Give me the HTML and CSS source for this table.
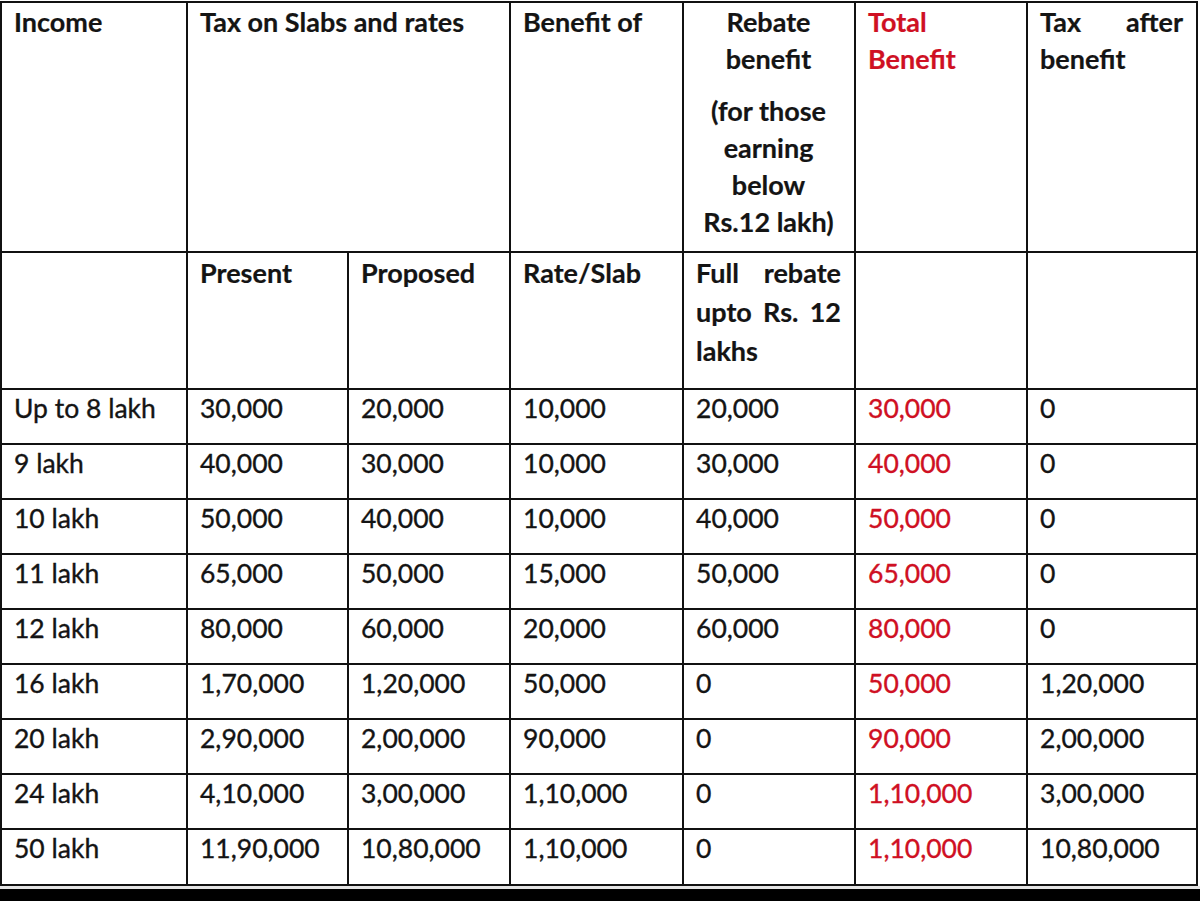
FILE: index.html
```html
<!DOCTYPE html>
<html lang="en">
<head>
<meta charset="utf-8">
<title>Tax benefit table</title>
<link rel="stylesheet" href="styles.css">
</head>
<body>
<table class="tax-table">
  <colgroup>
    <col class="c-income">
    <col class="c-present">
    <col class="c-proposed">
    <col class="c-slab">
    <col class="c-rebate">
    <col class="c-total">
    <col class="c-after">
  </colgroup>
  <thead>
    <tr class="head-1">
      <th>Income</th>
      <th colspan="2">Tax on Slabs and rates</th>
      <th>Benefit of</th>
      <th class="center">
        <div>Rebate<br>benefit</div>
        <div class="note">(for those<br>earning<br>below<br>Rs.12 lakh)</div>
      </th>
      <th class="red">Total Benefit</th>
      <th class="justify">Tax after benefit</th>
    </tr>
    <tr class="head-2">
      <th></th>
      <th>Present</th>
      <th>Proposed</th>
      <th>Rate/Slab</th>
      <th class="justify">Full rebate upto Rs. 12 lakhs</th>
      <th></th>
      <th></th>
    </tr>
  </thead>
  <tbody>
    <tr><td>Up to 8 lakh</td><td>30,000</td><td>20,000</td><td>10,000</td><td>20,000</td><td class="red">30,000</td><td>0</td></tr>
    <tr><td>9 lakh</td><td>40,000</td><td>30,000</td><td>10,000</td><td>30,000</td><td class="red">40,000</td><td>0</td></tr>
    <tr><td>10 lakh</td><td>50,000</td><td>40,000</td><td>10,000</td><td>40,000</td><td class="red">50,000</td><td>0</td></tr>
    <tr><td>11 lakh</td><td>65,000</td><td>50,000</td><td>15,000</td><td>50,000</td><td class="red">65,000</td><td>0</td></tr>
    <tr><td>12 lakh</td><td>80,000</td><td>60,000</td><td>20,000</td><td>60,000</td><td class="red">80,000</td><td>0</td></tr>
    <tr><td>16 lakh</td><td>1,70,000</td><td>1,20,000</td><td>50,000</td><td>0</td><td class="red">50,000</td><td>1,20,000</td></tr>
    <tr><td>20 lakh</td><td>2,90,000</td><td>2,00,000</td><td>90,000</td><td>0</td><td class="red">90,000</td><td>2,00,000</td></tr>
    <tr><td>24 lakh</td><td>4,10,000</td><td>3,00,000</td><td>1,10,000</td><td>0</td><td class="red">1,10,000</td><td>3,00,000</td></tr>
    <tr class="last"><td>50 lakh</td><td>11,90,000</td><td>10,80,000</td><td>1,10,000</td><td>0</td><td class="red">1,10,000</td><td>10,80,000</td></tr>
  </tbody>
</table>
<div class="edge"></div>
<div class="band"></div>
</body>
</html>
```
FILE: styles.css
```css
html, body {
  margin: 0;
  padding: 0;
  background: #ffffff;
}

body {
  font-family: "Lato", "Open Sans", sans-serif;
  color: #141414;
  width: 1200px;
  height: 901px;
  overflow: hidden;
}

.tax-table {
  margin-top: 1px;
  border-collapse: separate;
  border-spacing: 0;
  table-layout: fixed;
  width: 1198px;
  border-top: 2px solid #111;
  border-left: 2px solid #111;
  font-size: 26.5px;
}

.c-income { width: 186px; }
.c-present { width: 161px; }
.c-proposed { width: 162px; }
.c-slab { width: 173px; }
.c-rebate { width: 172px; }
.c-total { width: 172px; }
.c-after { width: 170px; }

.tax-table th,
.tax-table td {
  box-sizing: border-box;
  border-right: 2px solid #111;
  border-bottom: 2px solid #111;
  padding: 0 13px 0 12px;
  vertical-align: top;
  text-align: left;
}

.tax-table th {
  font-weight: 700;
  font-size: 27px;
  -webkit-text-stroke: 0.2px currentColor;
}

.head-1 th {
  height: 250px;
  line-height: 37px;
}

.head-2 th {
  height: 137px;
  line-height: 39px;
}

.tax-table td {
  height: 55px;
  line-height: 36px;
  font-weight: 400;
  -webkit-text-stroke: 0.35px currentColor;
}

.tax-table tr.last td {
  height: 56px;
}

.tax-table .center {
  text-align: center;
}

.tax-table .justify {
  text-align: justify;
}

.note {
  margin-top: 15px;
}

.red {
  color: #cf1023;
}

.edge {
  height: 3px;
  background: #e4e4e4;
}

.band {
  height: 20px;
  background: #000;
}
```
